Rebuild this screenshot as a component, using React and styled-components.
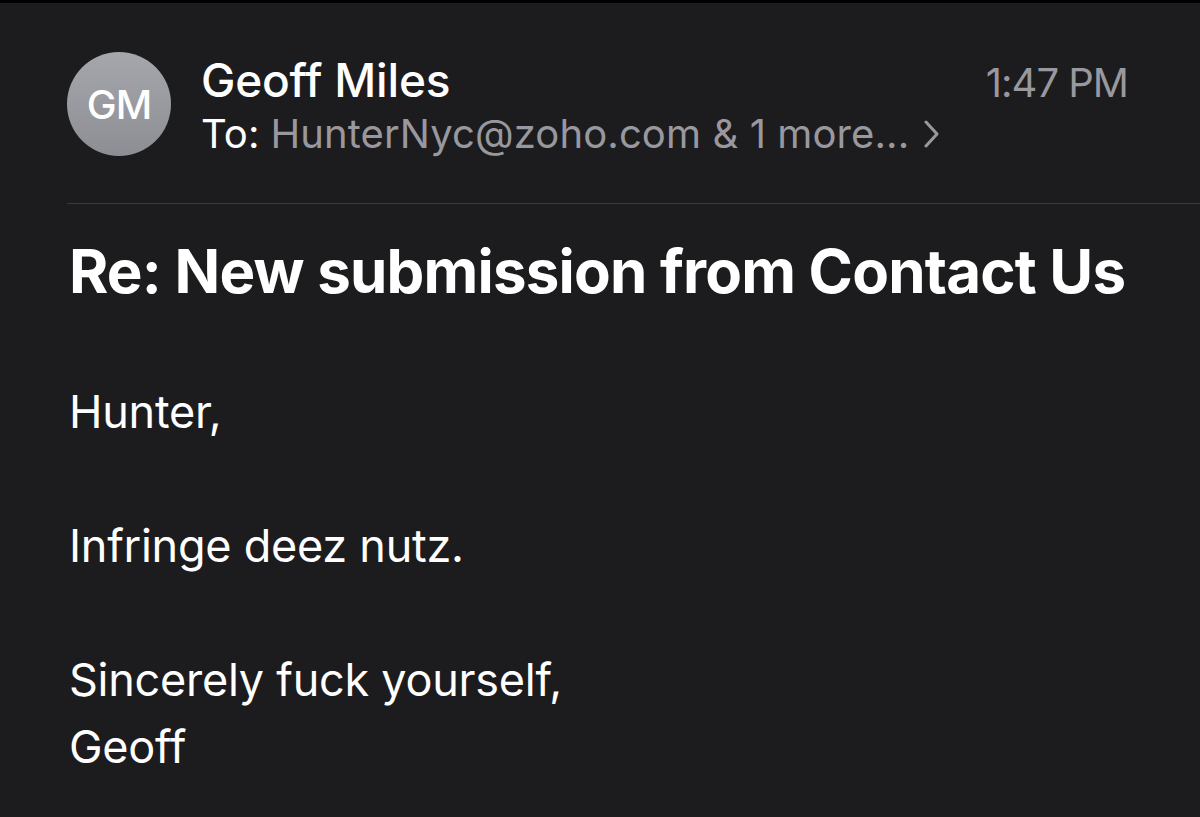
import React from 'react'
import styled, { createGlobalStyle } from 'styled-components'

const GlobalStyle = createGlobalStyle`
  html, body {
    margin: 0;
    padding: 0;
    background: #1c1c1e;
  }
  body {
    font-family: Inter, "Noto Sans", sans-serif;
    font-variant-ligatures: none;
    font-feature-settings: "liga" 0, "clig" 0;
    -webkit-font-smoothing: antialiased;
  }
`

const Screen = styled.div`
  width: 1200px;
  height: 817px;
  overflow: hidden;
  background: #1c1c1e;
  border-top: 3px solid #000;
  box-sizing: border-box;
`

const Header = styled.div`
  display: flex;
  align-items: flex-start;
  padding: 49px 72px 0 67px;
`

const Avatar = styled.div`
  width: 104px;
  height: 104px;
  border-radius: 50%;
  flex-shrink: 0;
  background: linear-gradient(180deg, #a5a7ad 0%, #8c8e94 100%);
  color: #fff;
  display: flex;
  align-items: center;
  justify-content: center;
  font-size: 40px;
  font-weight: 500;
  letter-spacing: -1px;
`

const Meta = styled.div`
  flex: 1;
  margin-left: 30px;
  display: flex;
  flex-direction: column;
`

const TopLine = styled.div`
  display: flex;
  justify-content: space-between;
  align-items: baseline;
  height: 52px;
`

const Sender = styled.span`
  color: #fff;
  font-size: 46px;
  font-weight: 500;
  letter-spacing: -0.2px;
`

const Time = styled.span`
  color: #98989e;
  font-size: 40px;
  font-weight: 400;
  letter-spacing: -1px;
`

const Recipients = styled.div`
  display: flex;
  align-items: center;
  gap: 15px;
  font-size: 40px;
  margin-top: 5px;
  color: #98989e;
  letter-spacing: 0.1px;
`

const ToLabel = styled.span`
  color: #fff;
  margin-right: -4px;
`

const Divider = styled.hr`
  border: none;
  height: 1px;
  background: #3a3a3c;
  margin: 45px 0 0 67px;
`

const Subject = styled.h1`
  margin: 32px 0 0 69px;
  color: #fff;
  font-size: 60px;
  font-weight: 700;
  letter-spacing: -0.8px;
  line-height: 70px;
`

const Body = styled.div`
  margin: 72px 0 0 69px;
  color: #fff;
  font-size: 45px;
  line-height: 67px;
  letter-spacing: -0.25px;
`

const Line = styled.div`
  min-height: 67px;
`

function Chevron() {
  return (
    <svg width="16" height="28" viewBox="0 0 16 28" fill="none">
      <path d="M2 2 L13 14 L2 26" stroke="#98989e" strokeWidth="3" strokeLinecap="round" strokeLinejoin="round" />
    </svg>
  )
}

export default function App() {
  const lines = ['Hunter,', '', 'Infringe deez nutz.', '', 'Sincerely fuck yourself,', 'Geoff']
  return (
    <Screen>
      <GlobalStyle />
      <Header>
        <Avatar>GM</Avatar>
        <Meta>
          <TopLine>
            <Sender>Geoff Miles</Sender>
            <Time>1:47 PM</Time>
          </TopLine>
          <Recipients>
            <ToLabel>To:</ToLabel>
            <span>HunterNyc@zoho.com &amp; 1 more...</span>
            <Chevron />
          </Recipients>
        </Meta>
      </Header>
      <Divider />
      <Subject>Re: New submission from Contact Us</Subject>
      <Body>
        {lines.map((l, i) => (
          <Line key={i}>{l}</Line>
        ))}
      </Body>
    </Screen>
  )
}
